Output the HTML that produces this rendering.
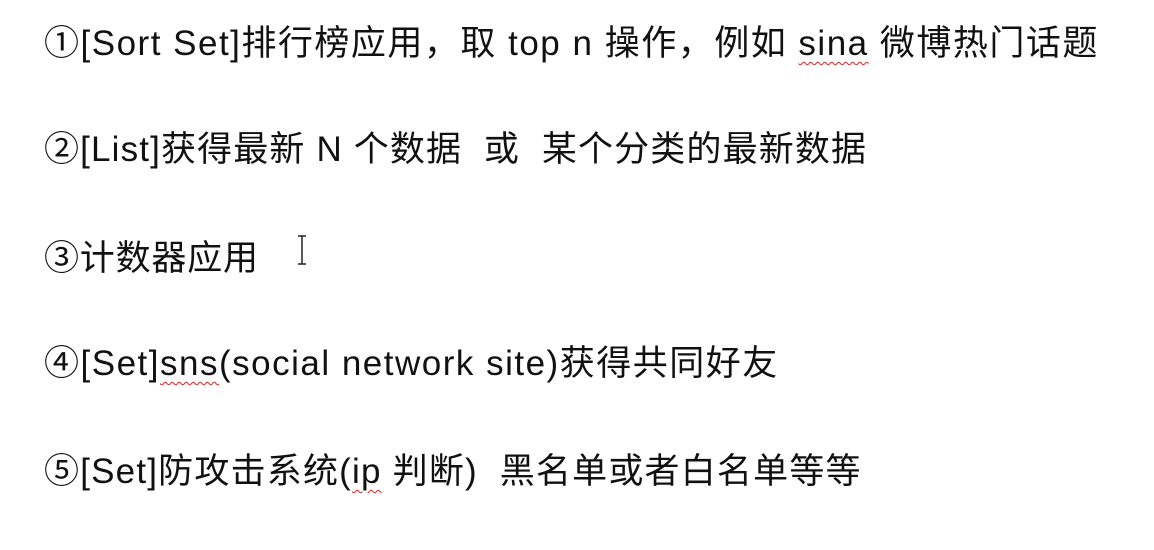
<!DOCTYPE html>
<html><head><meta charset="utf-8"><style>
html,body{margin:0;padding:0;background:#fff;width:1154px;height:550px;overflow:hidden}
.l{position:absolute;left:44px;font-family:"Liberation Sans","Noto Sans CJK SC",sans-serif;font-size:35px;letter-spacing:0.8px;line-height:40px;color:#111;white-space:pre}
.w{text-decoration:underline wavy #d22;text-decoration-thickness:1px;text-underline-offset:6px}
.cur{position:absolute;left:297px;top:235px;width:10px;height:30px}
</style></head><body>
<div class="l" style="top:24px;letter-spacing:1.5px">①[Sort Set]排行榜应用，取 top n 操作，例如 <span class="w">sina</span> 微博热门话题</div>
<div class="l" style="top:130px;letter-spacing:1.15px">②[List]获得最新 N 个数据  或  某个分类的最新数据</div>
<div class="l" style="top:239px">③计数器应用</div>
<svg class="cur" viewBox="0 0 10 30"><path d="M1 1h8M5 1v28M1 29h8" stroke="#222" stroke-width="1.5" fill="none"/></svg>
<div class="l" style="top:344px;letter-spacing:1.5px">④[Set]<span class="w">sns</span>(social network site)获得共同好友</div>
<div class="l" style="top:452px;letter-spacing:1.2px">⑤[Set]防攻击系统(<span class="w">ip</span> 判断)  黑名单或者白名单等等</div>
</body></html>
